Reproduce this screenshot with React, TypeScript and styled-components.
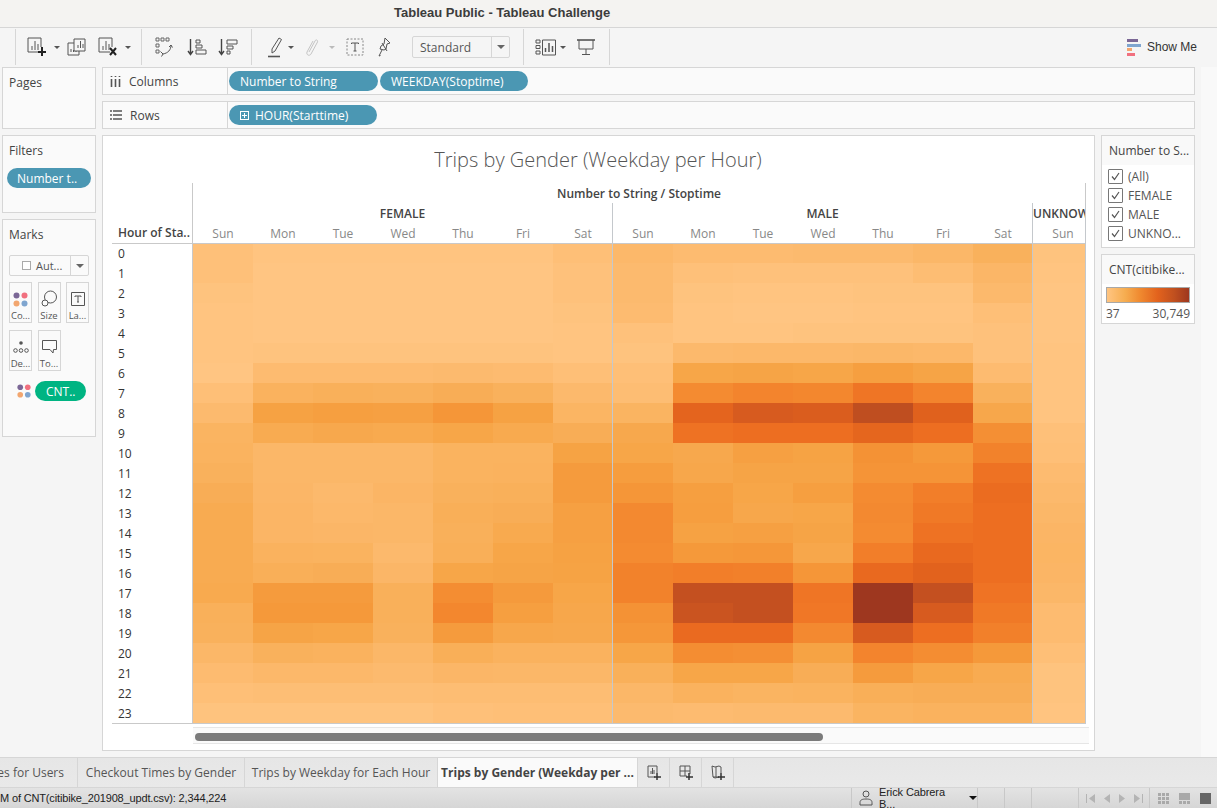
import React from 'react';
import styled, { createGlobalStyle } from 'styled-components';

const GlobalStyle = createGlobalStyle`
  html, body {
    margin: 0;
    padding: 0;
    background: #f5f5f5;
  }
  * {
    box-sizing: border-box;
  }
`;

const UI_FONT = `"Open Sans", "Noto Sans", sans-serif`;
const BORDER = '#d6d6d6';

const RAMP: [number, number[]][] = [
  [0, [255, 197, 130]],
  [10, [252, 185, 108]],
  [20, [249, 176, 90]],
  [30, [246, 163, 68]],
  [40, [245, 150, 56]],
  [50, [242, 128, 42]],
  [60, [237, 110, 33]],
  [70, [226, 98, 29]],
  [80, [207, 86, 32]],
  [90, [184, 74, 32]],
  [100, [158, 55, 31]],
];

const heatColour = (level: number) => {
  for (let i = 1; i < RAMP.length; i++) {
    const [hi, hiC] = RAMP[i];
    const [lo, loC] = RAMP[i - 1];
    if (level <= hi) {
      const t = (level - lo) / (hi - lo);
      const c = loC.map((v, j) => Math.round(v + (hiC[j] - v) * t));
      return `rgb(${c[0]},${c[1]},${c[2]})`;
    }
  }
  return 'rgb(158,55,31)';
};

const FEMALE = [
  [4, 1, 1, 1, 1, 1, 5],
  [4, 0, 0, 0, 0, 0, 3],
  [2, 0, 0, 0, 0, 0, 3],
  [1, 0, 0, 0, 0, 0, 2],
  [1, 0, 0, 0, 0, 0, 1],
  [1, 2, 2, 2, 2, 2, 1],
  [0, 8, 8, 8, 9, 8, 5],
  [5, 18, 20, 19, 22, 19, 10],
  [9, 31, 33, 32, 40, 31, 15],
  [16, 24, 26, 25, 28, 25, 22],
  [17, 12, 12, 12, 17, 17, 30],
  [19, 12, 12, 12, 17, 18, 36],
  [22, 13, 10, 14, 19, 20, 36],
  [24, 14, 11, 12, 21, 22, 32],
  [24, 14, 13, 12, 20, 25, 32],
  [24, 18, 17, 10, 21, 28, 31],
  [24, 21, 22, 13, 28, 29, 30],
  [25, 36, 36, 20, 44, 37, 28],
  [20, 38, 38, 20, 47, 33, 27],
  [19, 29, 28, 19, 36, 27, 26],
  [12, 19, 18, 12, 21, 18, 18],
  [8, 11, 11, 9, 13, 12, 12],
  [5, 6, 6, 6, 7, 7, 7],
  [2, 2, 2, 2, 4, 5, 5],
];

const MALE = [
  [11, 8, 8, 9, 9, 12, 19],
  [9, 4, 3, 3, 3, 7, 13],
  [9, 2, 1, 1, 2, 2, 10],
  [8, 1, 0, 0, 1, 1, 5],
  [3, 1, 1, 2, 2, 2, 3],
  [2, 10, 11, 11, 12, 11, 3],
  [5, 28, 29, 28, 33, 29, 8],
  [7, 45, 48, 47, 56, 48, 19],
  [16, 68, 76, 74, 87, 71, 27],
  [26, 58, 60, 60, 67, 60, 43],
  [28, 26, 32, 30, 42, 38, 49],
  [35, 27, 29, 29, 41, 41, 58],
  [40, 33, 28, 33, 45, 51, 62],
  [46, 34, 27, 28, 46, 54, 60],
  [46, 31, 32, 29, 45, 58, 60],
  [45, 38, 39, 27, 51, 64, 60],
  [49, 51, 50, 40, 64, 70, 60],
  [49, 85, 85, 56, 100, 85, 57],
  [42, 82, 85, 55, 100, 76, 54],
  [39, 63, 63, 46, 76, 60, 50],
  [28, 44, 43, 30, 48, 44, 38],
  [20, 28, 28, 22, 36, 28, 24],
  [12, 18, 16, 17, 21, 22, 22],
  [9, 8, 9, 9, 16, 18, 18],
];

const UNKNOWN = [2, 1, 0, 0, 0, 1, 1, 1, 1, 4, 5, 8, 10, 12, 14, 15, 14, 12, 8, 8, 5, 2, 2, 1].map((v) => [v]);

const DAYS = ['Sun', 'Mon', 'Tue', 'Wed', 'Thu', 'Fri', 'Sat'];
const HOURS = Array.from({ length: 24 }, (_, i) => i);

const Page = styled.div`
  width: 1217px;
  height: 808px;
  display: flex;
  flex-direction: column;
  overflow: hidden;
  background: #f5f5f5;
  font-family: ${UI_FONT};
  font-size: 12px;
  color: #444;
`;

const TitleBar = styled.div`
  height: 28px;
  flex: none;
  background: #f4f3f1;
  border-bottom: 1px solid ${BORDER};
  padding: 0 0 2px 394px;
  display: flex;
  align-items: center;
  font-family: "Liberation Sans", Arial, sans-serif;
  font-size: 13px;
  font-weight: 700;
  color: #3c3c3c;
`;

const Toolbar = styled.div`
  height: 39px;
  flex: none;
  padding: 1px 20px 2px 15px;
  display: flex;
  align-items: stretch;
`;

const ToolGroup = styled.div<{ $width: number; $last?: boolean }>`
  width: ${(p) => p.$width}px;
  flex: none;
  display: flex;
  align-items: center;
  border-left: 1px solid ${BORDER};
  ${(p) => (p.$last ? `border-right: 1px solid ${BORDER};` : '')}
`;

const Tool = styled.span<{ $left: number }>`
  display: inline-flex;
  margin-left: ${(p) => p.$left}px;
  flex: none;
`;

const Caret = styled.span<{ $left: number; $light?: boolean }>`
  flex: none;
  margin-left: ${(p) => p.$left}px;
  width: 0;
  height: 0;
  border-left: 3px solid transparent;
  border-right: 3px solid transparent;
  border-top: 3px solid ${(p) => (p.$light ? '#bbb' : '#555')};
`;

const StandardSelect = styled.div`
  margin-left: 19px;
  width: 98px;
  height: 22px;
  flex: none;
  display: flex;
  align-items: center;
  border: 1px solid ${BORDER};
  border-radius: 2px;
  padding-left: 7px;
  color: #555;
`;

const SelectLabel = styled.span`
  flex: 1;
`;

const SelectArrow = styled.span`
  width: 18px;
  height: 100%;
  border-left: 1px solid ${BORDER};
  display: flex;
  align-items: center;
  justify-content: center;
  &::after {
    content: '';
    border-left: 4px solid transparent;
    border-right: 4px solid transparent;
    border-top: 4px solid #666;
  }
`;

const ShowMe = styled.div`
  margin-left: auto;
  display: flex;
  align-items: center;
  gap: 6px;
  font-family: "Liberation Sans", Arial, sans-serif;
  font-size: 12px;
  color: #333;
`;

const Workspace = styled.div`
  flex: 1;
  min-height: 0;
  display: flex;
`;

const LeftColumn = styled.div`
  width: 94px;
  margin-left: 2px;
  flex: none;
  display: flex;
  flex-direction: column;
  gap: 6px;
`;

const Panel = styled.div<{ $height: number }>`
  height: ${(p) => p.$height}px;
  flex: none;
  background: #fafafa;
  border: 1px solid ${BORDER};
  padding: 0 4px;
`;

const PanelTitle = styled.div`
  height: 29px;
  padding: 8px 0 0 2px;
  line-height: 14px;
  color: #444;
`;

const Pill = styled.div<{ $width: number; $green?: boolean }>`
  width: ${(p) => p.$width}px;
  height: 20px;
  flex: none;
  border-radius: 10px;
  background: ${(p) => (p.$green ? '#00b482' : '#4b97b3')};
  color: #fff;
  display: flex;
  align-items: center;
  white-space: nowrap;
  overflow: hidden;
  padding-left: 11px;
`;

const FilterPill = styled(Pill)`
  margin-top: 3px;
  padding-left: 10px;
`;

const MarkSelect = styled.div`
  margin: 6px 2px 0;
  height: 21px;
  display: flex;
  align-items: center;
  border: 1px solid ${BORDER};
  border-radius: 2px;
  font-size: 11px;
  color: #555;
`;

const MarkSelectBody = styled.div`
  flex: 1;
  display: flex;
  align-items: center;
  gap: 5px;
  padding-left: 12px;
  height: 100%;
`;

const MarkCheck = styled.span`
  width: 9px;
  height: 9px;
  border: 1px solid #aaa;
  background: #fff;
`;

const MarkGrid = styled.div`
  margin: 6px 2px 0;
  display: grid;
  grid-template-columns: 23px 23px 23px;
  grid-auto-rows: 41px;
  column-gap: 5.5px;
  row-gap: 7px;
`;

const MarkButton = styled.div`
  border: 1px solid ${BORDER};
  display: flex;
  flex-direction: column;
  align-items: center;
  padding-top: 6px;
  font-size: 9.5px;
  line-height: 12px;
  color: #555;
`;

const MarkIcon = styled.div`
  height: 20px;
  margin-bottom: 1px;
  display: flex;
  align-items: center;
`;

const MarkField = styled.div`
  margin: 10px 0 0 9px;
  display: flex;
  align-items: center;
  gap: 3px;
`;

const CentreColumn = styled.div`
  width: 1093px;
  margin-left: 6px;
  flex: none;
  display: flex;
  flex-direction: column;
  gap: 6px;
`;

const Shelf = styled.div`
  height: 28px;
  flex: none;
  display: flex;
  background: #fafafa;
  border: 1px solid ${BORDER};
`;

const ShelfLabel = styled.div`
  width: 125px;
  flex: none;
  display: flex;
  align-items: center;
  gap: 8px;
  padding-left: 7px;
  border-right: 1px solid ${BORDER};
  color: #444;
`;

const ShelfPills = styled.div`
  display: flex;
  align-items: center;
  gap: 2px;
  padding-left: 1px;
`;

const PlusBox = styled.span`
  width: 9px;
  height: 9px;
  margin-right: 6px;
  border: 1px solid #fff;
  position: relative;
  &::before,
  &::after {
    content: '';
    position: absolute;
    background: #fff;
  }
  &::before {
    left: 1px;
    right: 1px;
    top: 3px;
    height: 1px;
  }
  &::after {
    top: 1px;
    bottom: 1px;
    left: 3px;
    width: 1px;
  }
`;

const StageRow = styled.div`
  height: 616px;
  flex: none;
  display: flex;
  gap: 6px;
`;

const ChartPanel = styled.div`
  width: 993px;
  flex: none;
  background: #fff;
  border: 1px solid ${BORDER};
  padding-left: 9px;
`;

const ChartTitle = styled.div`
  height: 47px;
  display: flex;
  align-items: center;
  justify-content: center;
  padding-right: 1px;
  font-size: 20px;
  font-weight: 300;
  color: #555;
  margin-right: 9px;
`;

const Crosstab = styled.div`
  display: flex;
  border-bottom: 1px solid #c9c9c9;
  width: 974px;
`;

const RowHeader = styled.div`
  width: 81px;
  flex: none;
  border-right: 1px solid #c9c9c9;
`;

const RowHeaderTitle = styled.div`
  height: 61px;
  padding: 40px 0 0 6px;
  line-height: 20px;
  border-bottom: 1px solid #c9c9c9;
  font-weight: 600;
  color: #444;
  white-space: nowrap;
`;

const RowLabels = styled.div`
  display: grid;
  grid-template-rows: 19px repeat(23, 20px);
`;

const RowLabel = styled.div`
  padding-left: 6px;
  display: flex;
  align-items: center;
  color: #333;
`;

const Pane = styled.div`
  flex: 1;
  min-width: 0;
`;

const AxisTitle = styled.div`
  width: 893px;
  height: 20px;
  border-right: 1px solid #c9c9c9;
  display: flex;
  align-items: center;
  justify-content: center;
  font-weight: 600;
  color: #444;
`;

const Groups = styled.div`
  display: flex;
`;

const Group = styled.div<{ $width: number }>`
  width: ${(p) => p.$width}px;
  flex: none;
  overflow: hidden;
  border-right: 1px solid #c4c8cc;
`;

const GroupHeader = styled.div`
  height: 20px;
  display: flex;
  align-items: center;
  justify-content: center;
  font-weight: 600;
  color: #444;
  white-space: nowrap;
`;

const ClippedHeader = styled(GroupHeader)`
  justify-content: flex-start;
`;

const DayRow = styled.div<{ $cols: number }>`
  height: 21px;
  display: grid;
  grid-template-columns: repeat(${(p) => p.$cols}, 60px);
  border-bottom: 1px solid #c9c9c9;
`;

const DayCell = styled.div`
  display: flex;
  align-items: center;
  justify-content: center;
  height: 20px;
  color: #888;
`;

const HeatGrid = styled.div<{ $cols: number }>`
  display: grid;
  grid-template-columns: repeat(${(p) => p.$cols}, 60px);
  grid-template-rows: 19px repeat(23, 20px);
`;

const ScrollTrack = styled.div`
  margin: 3px 0 0 81px;
  width: 896px;
  height: 17px;
  background: #fafafa;
  border-top: 1px solid #e6e6e6;
  border-bottom: 1px solid #e6e6e6;
  padding: 5px 0 0 2px;
`;

const ScrollThumb = styled.div`
  width: 628px;
  height: 8px;
  border-radius: 4px;
  background: #7b7b7b;
`;

const LegendColumn = styled.div`
  width: 94px;
  flex: none;
  display: flex;
  flex-direction: column;
  gap: 6px;
`;

const LegendCard = styled.div<{ $height: number }>`
  height: ${(p) => p.$height}px;
  flex: none;
  background: #fff;
  border: 1px solid ${BORDER};
`;

const LegendTitle = styled.div`
  height: 29px;
  background: #f9f9f9;
  padding: 7px 0 0 7px;
  line-height: 16px;
  color: #444;
  white-space: nowrap;
`;

const CheckRow = styled.div`
  height: 19px;
  display: flex;
  align-items: center;
  gap: 5px;
  padding-left: 6px;
  color: #555;
`;

const CheckBox = styled.span`
  width: 15px;
  height: 15px;
  border: 1px solid #777;
  border-radius: 1px;
  display: flex;
  align-items: center;
  justify-content: center;
`;

const CheckList = styled.div`
  padding-top: 2px;
`;

const Gradient = styled.div`
  margin: 3px 4px 0;
  height: 16px;
  border: 1px solid #a8a8a8;
  background: linear-gradient(
    to right,
    #ffc582 0%,
    #f6ad50 22%,
    #f08a30 40%,
    #e2621d 62%,
    #c0501f 82%,
    #9e371f 100%
  );
`;

const GradientLabels = styled.div`
  margin: 2px 4px 0;
  display: flex;
  justify-content: space-between;
  color: #555;
`;

const RightStrip = styled.div`
  margin-left: 6px;
  flex: 1;
  background: #f9f9f9;
`;

const TabBar = styled.div`
  height: 31px;
  flex: none;
  display: flex;
  background: linear-gradient(#e6e6e6, #e9e9e9);
  border-top: 1px solid ${BORDER};
  border-bottom: 1px solid ${BORDER};
`;

const Tab = styled.div<{ $width: number; $active?: boolean }>`
  width: ${(p) => p.$width}px;
  flex: none;
  display: flex;
  align-items: center;
  justify-content: center;
  white-space: nowrap;
  overflow: hidden;
  border-right: 1px solid ${BORDER};
  background: ${(p) => (p.$active ? '#fafafa' : 'transparent')};
  font-weight: ${(p) => (p.$active ? 700 : 400)};
  color: ${(p) => (p.$active ? '#444' : '#555')};
`;

const FirstTab = styled(Tab)`
  justify-content: flex-end;
  padding-right: 13px;
`;

const TabAdd = styled.div<{ $width: number }>`
  width: ${(p) => p.$width}px;
  flex: none;
  display: flex;
  align-items: center;
  justify-content: center;
  border-right: 1px solid ${BORDER};
`;

const StatusBar = styled.div`
  height: 20px;
  flex: none;
  display: flex;
  align-items: stretch;
  background: linear-gradient(#e3e3e3, #d6d6d6);
  font-family: "Liberation Sans", Arial, sans-serif;
  font-size: 11px;
  color: #222;
`;

const StatusText = styled.div`
  width: 851px;
  flex: none;
  display: flex;
  align-items: center;
  white-space: nowrap;
  letter-spacing: -0.15px;
`;

const StatusCell = styled.div<{ $width: number }>`
  width: ${(p) => p.$width}px;
  flex: none;
  display: flex;
  align-items: center;
  border-left: 1px solid #c8c8c8;
`;

const UserCell = styled(StatusCell)`
  padding-left: 7px;
  gap: 6px;
  letter-spacing: -0.1px;
`;

const UserCaret = styled.span`
  margin-left: 7px;
  border-left: 4px solid transparent;
  border-right: 4px solid transparent;
  border-top: 4px solid #111;
`;

const NavCell = styled(StatusCell)`
  justify-content: center;
  gap: 5px;
`;

const ViewCell = styled(StatusCell)`
  padding-left: 8px;
  gap: 10px;
`;

const Line = styled.svg`
  flex: none;
  fill: none;
  stroke: #555;
  stroke-width: 1;
`;

const DotsIcon = ({ size = 17 }: { size?: number }) => (
  <svg width={size} height={size} viewBox="0 0 17 17">
    <circle cx="4.5" cy="4.5" r="3" fill="#7b6796" />
    <circle cx="12.5" cy="4.5" r="3" fill="#f1707f" />
    <circle cx="4.5" cy="12.5" r="3" fill="#f2a66f" />
    <circle cx="12.5" cy="12.5" r="3" fill="#7fa5cf" />
  </svg>
);

const BoardBars = ({ x = 0 }: { x?: number }) => (
  <path d={`M${x + 5} 13V9M${x + 8} 13V4M${x + 11} 13V7`} />
);

const NewSheetIcon = () => (
  <Line width="20" height="20" viewBox="0 0 20 20">
    <path d="M13 15H1V1h13v9" />
    <BoardBars x={0} />
    <path d="M15 10v9M11 15h8" stroke="#222" strokeWidth="2" />
  </Line>
);

const ClearSheetIcon = () => (
  <Line width="20" height="20" viewBox="0 0 20 20">
    <path d="M12 15H1V1h13v9" />
    <BoardBars x={0} />
    <path d="M12 11l6 7M18 11l-6 7" stroke="#222" strokeWidth="2" />
  </Line>
);

const DuplicateIcon = () => (
  <Line width="19" height="18" viewBox="0 0 19 18">
    <path d="M7 1h11v12H7z" />
    <path d="M7 5H1v12h11v-4" />
    <path d="M11 10V7M13.500 10V3M16 10V6M4 14v-3M6.500 14v-2M9 14v-1" />
  </Line>
);

const SwapIcon = () => (
  <Line width="18" height="20" viewBox="0 0 18 20">
    <path d="M1 1h3v3H1zM6 1h3v3H6zM11 1h3v3h-3zM1 7h3v3H1zM1 13h3v3H1z" stroke="#666" />
    <path d="M16 8c0 5-3 8-8 9M5.500 14.500L8 17l-1.500 2.500M14 10l2-2 1.500 2.500" />
  </Line>
);

const SortIcon = ({ flip }: { flip?: boolean }) => (
  <Line width="20" height="18" viewBox="0 0 20 18">
    <path d="M3.500 1v15M1 13l2.500 3.500L6 13" strokeWidth="1.400" stroke="#444" />
    {flip ? (
      <path d="M9 2h10v4H9zM9 8h6v3H9zM9 13h3v3H9z" />
    ) : (
      <path d="M9 2h4v3H9zM9 7h6v3H9zM9 12h10v4H9z" />
    )}
  </Line>
);

const PenIcon = () => (
  <Line width="16" height="22" viewBox="0 0 16 22">
    <path d="M5 13l7-11 2.500 1.500-6.500 11.500-3 2z" />
    <path d="M1 20.500h12" stroke="#555" strokeWidth="1.600" />
  </Line>
);

const ClipIcon = () => (
  <Line width="15" height="20" viewBox="0 0 15 20" style={{ stroke: '#c4c4c4' }}>
    <path d="M5 15l6-11c1-2 3-1 2.500 1L7 17c-1.500 2.500-5 1-4-2l6-11" />
  </Line>
);

const TextBoxIcon = () => (
  <Line width="18" height="18" viewBox="0 0 18 18">
    <path d="M1 1h16v16H1z" strokeDasharray="2 1.500" stroke="#888" />
    <path d="M5.500 6V5h7v1M9 5v8M7.500 13h3" />
  </Line>
);

const PinIcon = () => (
  <Line width="16" height="20" viewBox="0 0 16 20">
    <path d="M8 1l5 5-3 1-1 5-2 1-4-1 1-3 3-2zM5 13l-3 6 1.500-.5" />
    <path d="M5 6l5 8" />
  </Line>
);

const FitIcon = () => (
  <Line width="21" height="17" viewBox="0 0 21 17">
    <path d="M1 1h4v3H1zM1 6.500h4v3H1zM1 12h4v3H1zM7.500 1h13v15h-13z" />
    <path d="M10.500 13V9M14 13V4M17.500 13V7" strokeWidth="1.500" />
  </Line>
);

const PresentIcon = () => (
  <Line width="18" height="18" viewBox="0 0 18 18">
    <path d="M0 2h18" strokeWidth="1.600" />
    <path d="M2 2v9h14V2M9 11v5M5 16.500h8" />
  </Line>
);

const ShowMeIcon = () => (
  <svg width="14" height="17" viewBox="0 0 14 17">
    <rect x="0" y="0" width="11" height="3" fill="#7b6796" />
    <rect x="0" y="5" width="14" height="3" fill="#7fa5cf" />
    <rect x="0" y="9" width="5" height="3" fill="#f2a66f" />
    <rect x="0" y="14" width="8" height="3" fill="#f1707f" />
  </svg>
);

const ColumnsIcon = () => (
  <Line width="11" height="12" viewBox="0 0 11 12">
    <path d="M1.500 1v1M1.500 4v8M5.500 1v1M5.500 4v8M9.500 1v1M9.500 4v8" strokeWidth="1.600" />
  </Line>
);

const RowsIcon = () => (
  <Line width="12" height="10" viewBox="0 0 12 10">
    <path d="M0 1h2M3 1h9M0 5h2M3 5h9M0 9h2M3 9h9" strokeWidth="1.300" />
  </Line>
);

const SizeIcon = () => (
  <Line width="16" height="18" viewBox="0 0 16 18">
    <circle cx="9.500" cy="7" r="6" />
    <circle cx="4" cy="13" r="3" fill="#fafafa" />
  </Line>
);

const LabelIcon = () => (
  <Line width="14" height="14" viewBox="0 0 14 14">
    <path d="M.5.500h13v13H.5z" />
    <path d="M4 5V4h6v1M7 4v6M6 10h2" />
  </Line>
);

const DetailIcon = () => (
  <Line width="16" height="12" viewBox="0 0 16 12">
    <circle cx="8" cy="2" r="1.800" fill="#555" stroke="none" />
    <circle cx="2.500" cy="9.500" r="1.800" />
    <circle cx="8" cy="9.500" r="1.800" />
    <circle cx="13.500" cy="9.500" r="1.800" />
  </Line>
);

const TooltipIcon = () => (
  <Line width="15" height="14" viewBox="0 0 15 14">
    <path d="M.5.500h14v9h-3l-.5 3.500-3-3.500H.5z" />
  </Line>
);

const TickIcon = () => (
  <Line width="9" height="9" viewBox="0 0 9 9">
    <path d="M1 4.500l2.500 3L8 1" strokeWidth="1.200" />
  </Line>
);

const AddSheet = () => (
  <Line width="14" height="16" viewBox="0 0 14 16">
    <path d="M8 12H1V1h9v7" />
    <path d="M4 9V6M5.500 9V3M7 9V5" />
    <path d="M10 8v7M7 12h7" stroke="#333" strokeWidth="1.500" />
  </Line>
);

const AddDashboard = () => (
  <Line width="14" height="16" viewBox="0 0 14 16">
    <path d="M8 11H1V1h10v8M6 1v10M1 6h10" />
    <path d="M10 8v7M7 12h7" stroke="#333" strokeWidth="1.500" />
  </Line>
);

const AddStory = () => (
  <Line width="14" height="16" viewBox="0 0 14 16">
    <path d="M1 1l3 1 4-1 2 1v6M8 12l-4 1-2-1zM1 1l1 11M5 2v10" />
    <path d="M10 8v7M7 12h7" stroke="#333" strokeWidth="1.500" />
  </Line>
);

const UserIcon = () => (
  <Line width="14" height="16" viewBox="0 0 14 16">
    <circle cx="7" cy="4" r="3" />
    <path d="M1 15v-2.500C1 10 3 9 7 9s6 1 6 3.500V15z" />
  </Line>
);

const NavIcon = ({ d }: { d: string }) => (
  <svg width="11" height="9" viewBox="0 0 11 9">
    <path d={d} fill="#b4b4b4" />
  </svg>
);

const GridViewIcon = () => (
  <svg width="11" height="11" viewBox="0 0 11 11" fill="#a9a9a9">
    {[0, 4, 8].map((y) =>
      [0, 4, 8].map((x) => <rect key={`${x}-${y}`} x={x} y={y} width="3" height="3" />),
    )}
  </svg>
);

const MidViewIcon = () => (
  <svg width="11" height="11" viewBox="0 0 11 11" fill="#a9a9a9">
    <rect x="0" y="0" width="11" height="7" />
    <rect x="0" y="8" width="3" height="3" />
    <rect x="4" y="8" width="3" height="3" />
    <rect x="8" y="8" width="3" height="3" />
  </svg>
);

const FullViewIcon = () => (
  <svg width="11" height="11" viewBox="0 0 11 11">
    <rect width="11" height="11" fill="#666" />
  </svg>
);

const Heat: React.FC<{ data: number[][] }> = ({ data }) => (
  <HeatGrid $cols={data[0].length}>
    {data.flatMap((row, r) =>
      row.map((level, c) => <div key={`${r}-${c}`} style={{ background: heatColour(level) }} />),
    )}
  </HeatGrid>
);

const Days: React.FC<{ days: string[] }> = ({ days }) => (
  <DayRow $cols={days.length}>
    {days.map((d) => (
      <DayCell key={d}>{d}</DayCell>
    ))}
  </DayRow>
);

const App: React.FC = () => (
  <Page>
    <GlobalStyle />
    <TitleBar>Tableau Public - Tableau Challenge</TitleBar>

    <Toolbar>
      <ToolGroup $width={126}>
        <Tool $left={11}>
          <NewSheetIcon />
        </Tool>
        <Caret $left={7} />
        <Tool $left={7}>
          <DuplicateIcon />
        </Tool>
        <Tool $left={12}>
          <ClearSheetIcon />
        </Tool>
        <Caret $left={7} />
      </ToolGroup>
      <ToolGroup $width={110}>
        <Tool $left={13}>
          <SwapIcon />
        </Tool>
        <Tool $left={14}>
          <SortIcon />
        </Tool>
        <Tool $left={11}>
          <SortIcon flip />
        </Tool>
      </ToolGroup>
      <ToolGroup $width={272}>
        <Tool $left={15}>
          <PenIcon />
        </Tool>
        <Caret $left={5} />
        <Tool $left={10}>
          <ClipIcon />
        </Tool>
        <Caret $left={10} $light />
        <Tool $left={11}>
          <TextBoxIcon />
        </Tool>
        <Tool $left={13}>
          <PinIcon />
        </Tool>
        <StandardSelect>
          <SelectLabel>Standard</SelectLabel>
          <SelectArrow />
        </StandardSelect>
      </ToolGroup>
      <ToolGroup $width={87} $last>
        <Tool $left={11}>
          <FitIcon />
        </Tool>
        <Caret $left={4} />
        <Tool $left={11}>
          <PresentIcon />
        </Tool>
      </ToolGroup>
      <ShowMe>
        <ShowMeIcon />
        Show Me
      </ShowMe>
    </Toolbar>

    <Workspace>
      <LeftColumn>
        <Panel $height={62}>
          <PanelTitle>Pages</PanelTitle>
        </Panel>
        <Panel $height={78}>
          <PanelTitle>Filters</PanelTitle>
          <FilterPill $width={84}>Number t..</FilterPill>
        </Panel>
        <Panel $height={218}>
          <PanelTitle>Marks</PanelTitle>
          <MarkSelect>
            <MarkSelectBody>
              <MarkCheck />
              Aut...
            </MarkSelectBody>
            <SelectArrow />
          </MarkSelect>
          <MarkGrid>
            <MarkButton>
              <MarkIcon>
                <DotsIcon />
              </MarkIcon>
              Co...
            </MarkButton>
            <MarkButton>
              <MarkIcon>
                <SizeIcon />
              </MarkIcon>
              Size
            </MarkButton>
            <MarkButton>
              <MarkIcon>
                <LabelIcon />
              </MarkIcon>
              La...
            </MarkButton>
            <MarkButton>
              <MarkIcon>
                <DetailIcon />
              </MarkIcon>
              De...
            </MarkButton>
            <MarkButton>
              <MarkIcon>
                <TooltipIcon />
              </MarkIcon>
              To...
            </MarkButton>
          </MarkGrid>
          <MarkField>
            <DotsIcon size={16} />
            <Pill $width={51} $green>
              CNT..
            </Pill>
          </MarkField>
        </Panel>
      </LeftColumn>

      <CentreColumn>
        <Shelf>
          <ShelfLabel>
            <ColumnsIcon />
            Columns
          </ShelfLabel>
          <ShelfPills>
            <Pill $width={149}>Number to String</Pill>
            <Pill $width={148}>WEEKDAY(Stoptime)</Pill>
          </ShelfPills>
        </Shelf>
        <Shelf>
          <ShelfLabel>
            <RowsIcon />
            Rows
          </ShelfLabel>
          <ShelfPills>
            <Pill $width={148}>
              <PlusBox />
              HOUR(Starttime)
            </Pill>
          </ShelfPills>
        </Shelf>

        <StageRow>
          <ChartPanel>
            <ChartTitle>Trips by Gender (Weekday per Hour)</ChartTitle>
            <Crosstab>
              <RowHeader>
                <RowHeaderTitle>Hour of Sta..</RowHeaderTitle>
                <RowLabels>
                  {HOURS.map((h) => (
                    <RowLabel key={h}>{h}</RowLabel>
                  ))}
                </RowLabels>
              </RowHeader>
              <Pane>
                <AxisTitle>Number to String / Stoptime</AxisTitle>
                <Groups>
                  <Group $width={420}>
                    <GroupHeader>FEMALE</GroupHeader>
                    <Days days={DAYS} />
                    <Heat data={FEMALE} />
                  </Group>
                  <Group $width={420}>
                    <GroupHeader>MALE</GroupHeader>
                    <Days days={DAYS} />
                    <Heat data={MALE} />
                  </Group>
                  <Group $width={53}>
                    <ClippedHeader>UNKNOWN</ClippedHeader>
                    <Days days={['Sun']} />
                    <Heat data={UNKNOWN} />
                  </Group>
                </Groups>
              </Pane>
            </Crosstab>
            <ScrollTrack>
              <ScrollThumb />
            </ScrollTrack>
          </ChartPanel>

          <LegendColumn>
            <LegendCard $height={113}>
              <LegendTitle>Number to S...</LegendTitle>
              <CheckList>
                {['(All)', 'FEMALE', 'MALE', 'UNKNO...'].map((item) => (
                  <CheckRow key={item}>
                    <CheckBox>
                      <TickIcon />
                    </CheckBox>
                    {item}
                  </CheckRow>
                ))}
              </CheckList>
            </LegendCard>
            <LegendCard $height={70}>
              <LegendTitle>CNT(citibike...</LegendTitle>
              <Gradient />
              <GradientLabels>
                <span>37</span>
                <span>30,749</span>
              </GradientLabels>
            </LegendCard>
          </LegendColumn>
        </StageRow>
      </CentreColumn>
      <RightStrip />
    </Workspace>

    <TabBar>
      <FirstTab $width={78}>es for Users</FirstTab>
      <Tab $width={167}>Checkout Times by Gender</Tab>
      <Tab $width={193}>Trips by Weekday for Each Hour</Tab>
      <Tab $width={200} $active>
        Trips by Gender (Weekday per ...
      </Tab>
      <TabAdd $width={32}>
        <AddSheet />
      </TabAdd>
      <TabAdd $width={32}>
        <AddDashboard />
      </TabAdd>
      <TabAdd $width={32}>
        <AddStory />
      </TabAdd>
    </TabBar>

    <StatusBar>
      <StatusText>M of CNT(citibike_201908_updt.csv): 2,344,224</StatusText>
      <UserCell $width={126}>
        <UserIcon />
        Erick Cabrera B...
        <UserCaret />
      </UserCell>
      <StatusCell $width={27} />
      <StatusCell $width={27} />
      <StatusCell $width={47} />
      <NavCell $width={71}>
        <NavIcon d="M1 0h1v9H1zM10 0v9L4 4.500z" />
        <NavIcon d="M9 0v9L3 4.500z" />
        <NavIcon d="M2 0v9l6-4.500z" />
        <NavIcon d="M10 0H9v9h1zM1 0v9l6-4.500z" />
      </NavCell>
      <ViewCell $width={68}>
        <GridViewIcon />
        <MidViewIcon />
        <FullViewIcon />
      </ViewCell>
    </StatusBar>
  </Page>
);

export default App;
